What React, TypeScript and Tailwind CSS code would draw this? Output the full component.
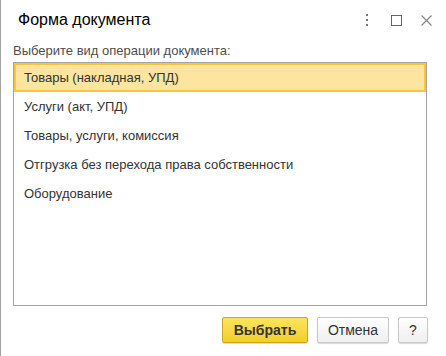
import React from "react";

const items = [
  "Товары (накладная, УПД)",
  "Услуги (акт, УПД)",
  "Товары, услуги, комиссия",
  "Отгрузка без перехода права собственности",
  "Оборудование",
];

export default function App() {
  return (
    <div
      className="w-[446px] h-[356px] bg-white border-l border-[#a3a3a3] flex flex-col overflow-hidden"
      style={{ fontFamily: '"Liberation Sans", Arial, sans-serif' }}
    >
      <div className="h-[40px] flex items-center pl-[17px] pr-[14px]">
        <div className="text-[16px] text-black flex-1 leading-none">Форма документа</div>
        <div className="flex items-center">
          <svg width="4" height="12" viewBox="0 0 4 12">
            <rect x="1" y="0" width="2" height="2" fill="#777" />
            <rect x="1" y="5" width="2" height="2" fill="#777" />
            <rect x="1" y="10" width="2" height="2" fill="#777" />
          </svg>
          <svg width="11" height="11" viewBox="0 0 11 11" className="ml-[22px]">
            <rect x="0.5" y="0.5" width="10" height="10" fill="none" stroke="#666" />
          </svg>
          <svg width="11" height="11" viewBox="0 0 11 11" className="ml-[19px]">
            <path d="M0.5 0.5 L10.5 10.5 M10.5 0.5 L0.5 10.5" stroke="#888" strokeWidth="1.2" />
          </svg>
        </div>
      </div>
      <div className="pl-[12px] pr-[19px]">
        <div className="text-[13px] text-[#4d4d4d] leading-none h-[22px] pt-[4px]">
          Выберите вид операции документа:
        </div>
        <div className="h-[244px] border border-[#a3a3a3] flex flex-col">
          {items.map((t, i) => (
            <div
              key={t}
              className={
                i === 0
                  ? "h-[29px] flex items-center pl-[8px] text-[13px] text-[#333] bg-[#fde59f] border-2 border-[#f8c63a]"
                  : "h-[29px] flex items-center pl-[10px] text-[13px] text-[#333]"
              }
            >
              {t}
            </div>
          ))}
        </div>
        <div className="flex justify-end gap-[9px] mt-[11px] -mr-[1px]">
          <button className="w-[86px] h-[26px] rounded-[2px] border border-[#c9a71a] bg-gradient-to-b from-[#fbe45c] to-[#f4cf2a] text-[14px] font-bold text-[#333] shadow-[0_1px_1px_rgba(0,0,0,0.15)]">
            Выбрать
          </button>
          <button className="w-[72px] h-[26px] rounded-[2px] border border-[#c8c8c8] bg-gradient-to-b from-white to-[#efefef] text-[14px] text-[#333] shadow-[0_1px_1px_rgba(0,0,0,0.15)]">
            Отмена
          </button>
          <button className="w-[30px] h-[26px] rounded-[2px] border border-[#c8c8c8] bg-gradient-to-b from-white to-[#efefef] text-[14px] text-[#333] shadow-[0_1px_1px_rgba(0,0,0,0.15)]">
            ?
          </button>
        </div>
      </div>
    </div>
  );
}
